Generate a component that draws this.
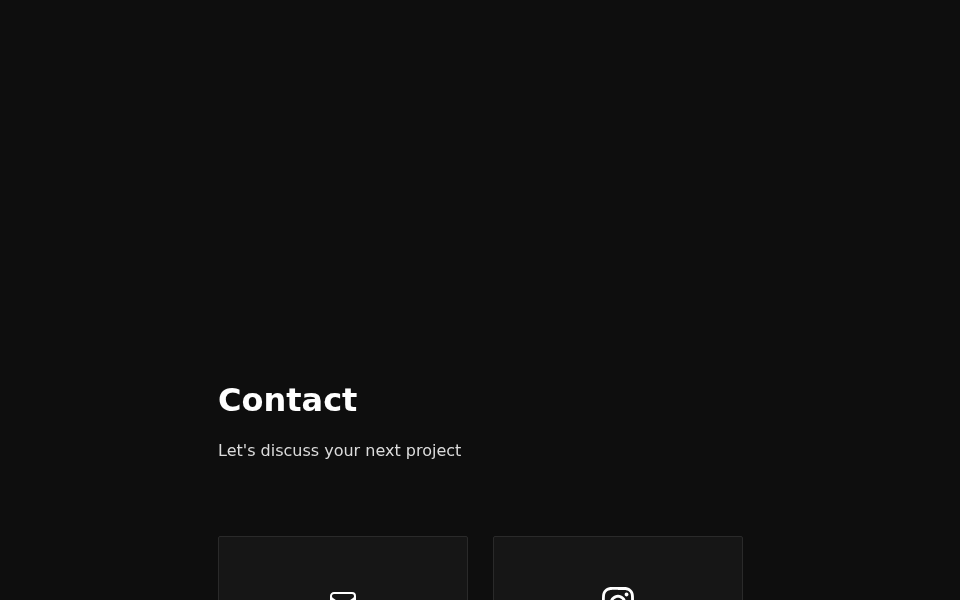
<main class="page">
  <section class="contact">
    <h1>Contact</h1>
    <p class="lead">Let's discuss your next project</p>
    <div class="cards">
      <a class="card" href="#email" aria-label="Email">
        <svg class="icon" viewBox="0 0 24 24" width="32" height="32" fill="none" stroke="currentColor" stroke-width="1.5" stroke-linecap="round" stroke-linejoin="round">
          <path d="M21 6.75v10.5a2.25 2.25 0 0 1-2.25 2.25H5.25A2.25 2.25 0 0 1 3 17.25V6.75m18 0a2.25 2.25 0 0 0-2.25-2.25H5.25A2.25 2.25 0 0 0 3 6.75m18 0v.243a2.25 2.25 0 0 1-1.07 1.916l-6.75 4.615a2.25 2.25 0 0 1-2.36 0L4.07 8.91A2.25 2.25 0 0 1 3 6.994V6.75" />
        </svg>
      </a>
      <a class="card" href="#instagram" aria-label="Instagram">
        <svg class="icon" viewBox="0 0 24 24" width="32" height="32" fill="currentColor">
          <path d="M12 0C8.74 0 8.333.015 7.053.072 5.775.132 4.905.333 4.14.63c-.789.306-1.459.717-2.126 1.384S.935 3.35.63 4.14C.333 4.905.131 5.775.072 7.053.012 8.333 0 8.74 0 12s.015 3.667.072 4.947c.06 1.277.261 2.148.558 2.913.306.788.717 1.459 1.384 2.126.667.666 1.336 1.079 2.126 1.384.766.296 1.636.499 2.913.558C8.333 23.988 8.74 24 12 24s3.667-.015 4.947-.072c1.277-.06 2.148-.262 2.913-.558.788-.306 1.459-.718 2.126-1.384.666-.667 1.079-1.335 1.384-2.126.296-.765.499-1.636.558-2.913.06-1.28.072-1.687.072-4.947s-.015-3.667-.072-4.947c-.06-1.277-.262-2.149-.558-2.913-.306-.789-.718-1.459-1.384-2.126C21.319 1.347 20.651.935 19.86.63c-.765-.297-1.636-.499-2.913-.558C15.667.012 15.26 0 12 0zm0 2.16c3.203 0 3.585.016 4.85.071 1.17.055 1.805.249 2.227.415.562.217.96.477 1.382.896.419.42.679.819.896 1.381.164.422.36 1.057.413 2.227.057 1.266.07 1.646.07 4.85s-.015 3.585-.074 4.85c-.061 1.17-.256 1.805-.421 2.227-.224.562-.479.96-.899 1.382-.419.419-.824.679-1.38.896-.42.164-1.065.36-2.235.413-1.274.057-1.649.07-4.859.07-3.211 0-3.586-.015-4.859-.074-1.171-.061-1.816-.256-2.236-.421-.569-.224-.96-.479-1.379-.899-.421-.419-.69-.824-.9-1.38-.165-.42-.359-1.065-.42-2.235-.045-1.26-.061-1.649-.061-4.844 0-3.196.016-3.586.061-4.861.061-1.17.255-1.814.42-2.234.21-.57.479-.96.9-1.381.419-.419.81-.689 1.379-.898.42-.166 1.051-.361 2.221-.421 1.275-.045 1.65-.06 4.859-.06l.045.03zm0 3.678c-3.405 0-6.162 2.76-6.162 6.162 0 3.405 2.76 6.162 6.162 6.162 3.405 0 6.162-2.76 6.162-6.162 0-3.405-2.76-6.162-6.162-6.162zM12 16c-2.21 0-4-1.79-4-4s1.79-4 4-4 4 1.79 4 4-1.79 4-4 4zm7.846-10.405c0 .795-.646 1.44-1.44 1.44-.795 0-1.44-.646-1.44-1.44 0-.794.646-1.439 1.44-1.439.793-.001 1.44.645 1.44 1.439z" />
        </svg>
      </a>
    </div>
  </section>
</main>

<style>
  :global(body) {
    margin: 0;
    background: #0e0e0e;
    overflow: hidden;
  }
  .page {
    height: 600px;
    overflow: hidden;
    font-family: "DejaVu Sans", sans-serif;
    color: #fff;
  }
  .contact {
    box-sizing: border-box;
    width: 525px;
    margin-left: 218px;
    padding-top: 380px;
    will-change: transform;
  }
  h1 {
    margin: 0;
    font-size: 32px;
    line-height: 40px;
    font-weight: 700;
  }
  .lead {
    margin: 21px 0 0;
    font-size: 16px;
    line-height: 20px;
    color: #dcdcdc;
  }
  .cards {
    display: grid;
    grid-template-columns: 250px 250px;
    gap: 25px;
    margin-top: 75px;
  }
  .card {
    box-sizing: border-box;
    height: 200px;
    background: #161616;
    border: 1px solid #2a2a2a;
    border-radius: 2px;
    color: #fff;
    display: flex;
    justify-content: center;
    padding-top: 50px;
  }
</style>
